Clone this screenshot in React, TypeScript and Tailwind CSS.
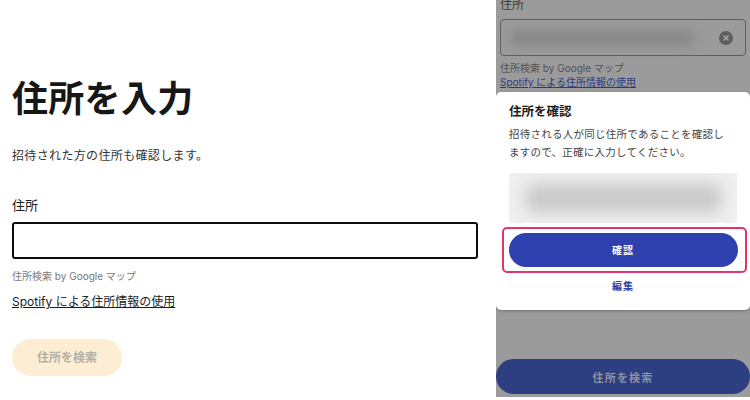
const FONT = "font-['Inter','Noto_Sans_CJK_JP',sans-serif]"

function AddressForm() {
  return (
    <div className="w-[496px] shrink-0 pl-3 pr-[18px] pt-[76px]">
      <h1 className="text-[36px] leading-[46px] font-bold text-[#171717] tracking-[0.3px]">住所を入力</h1>
      <p className="mt-[25px] text-[12px] leading-[18px] text-[#333333] tracking-[0.35px]">招待された方の住所も確認します。</p>
      <label className="block mt-[31px] text-[13px] leading-[18px] text-[#1c1c1c]">住所</label>
      <div className="mt-[8px] h-[37px] rounded-[3px] border-2 border-[#0d0d0d] bg-white" />
      <p className="mt-[9px] text-[10px] leading-[16px] text-[#777777]">住所検索 by Google マップ</p>
      <a className="block mt-[10px] w-fit text-[12px] leading-[16px] text-[#1c1c1c] underline">Spotify による住所情報の使用</a>
      <button className="mt-[29px] block w-[110px] h-[37px] rounded-full bg-[#fdeed3] text-[12px] font-bold text-[#b3aea5]">住所を検索</button>
    </div>
  )
}

function ConfirmPanel() {
  return (
    <div className="w-[254px] shrink-0 h-[397px] bg-[#9b9b9b] flex flex-col overflow-hidden">
      {/* dimmed form behind the dialog */}
      <div className="h-[92px] shrink-0 px-[4px]">
        <div className="text-[12px] leading-[14px] text-[#3a3a3a] -mt-[2px]">住所</div>
        <div className="mt-[7px] h-[37px] rounded-[4px] border border-[#5f5f5f] flex items-center pl-[10px] pr-[12px]">
          <div className="h-[14px] flex-1 mr-[10px] bg-[#858585] blur-[6px]" />
          <div className="ml-[16px] w-[14px] h-[14px] rounded-full bg-[#5e5e5e] flex items-center justify-center">
            <svg width="8" height="8" viewBox="0 0 8 8" stroke="#a8a8a8" strokeWidth="1.3">
              <path d="M1.5 1.5l5 5M6.5 1.5l-5 5" />
            </svg>
          </div>
        </div>
        <div className="mt-[5px] text-[10px] leading-[14px] text-[#525252]">住所検索 by Google マップ</div>
        <a className="block w-fit text-[10px] leading-[14px] text-[#2c3a7e] underline">Spotify による住所情報の使用</a>
      </div>

      {/* dialog */}
      <div className="h-[218px] shrink-0 bg-white rounded-[5px] shadow-[0_1px_3px_rgba(0,0,0,0.25)] pl-[6px] pr-[3px]">
        <h2 className="mt-[11px] ml-[7px] text-[12.5px] leading-[18px] font-bold text-[#1a1a1a]">住所を確認</h2>
        <p className="mt-[5px] ml-[7px] text-[10.5px] leading-[18px] text-[#444444] tracking-[0.25px] w-[225px]">
          招待される人が同じ住所であることを確認しますので、正確に入力してください。
        </p>
        <div className="mt-[11px] ml-[7px] mr-[10px] h-[50px] rounded-[3px] bg-[#f0f0f0] flex items-center justify-center overflow-hidden">
          <div className="w-[195px] h-[28px] bg-[#c8c8c8] blur-[8px]" />
        </div>
        <div className="mt-[4px] h-[46px] rounded-[5px] border-[2.5px] border-[#e2356b] py-[4px] pl-[4.5px] pr-[7.5px]">
          <button className="w-full h-full rounded-full bg-[#2f41ae] text-[10px] font-bold tracking-[1px] text-white">確認</button>
        </div>
        <div className="mt-[6px] text-center text-[10px] leading-[14px] font-bold tracking-[1px] text-[#2f41ae] pr-[3px]">編集</div>
      </div>

      {/* dimmed submit button */}
      <div className="flex-1 flex flex-col justify-end pb-[3px]">
        <button className="w-full h-[35px] pt-[3px] rounded-full bg-[#2d3f80] text-[11px] font-bold tracking-[1.2px] text-[#8e93a6]">住所を検索</button>
      </div>
    </div>
  )
}

export default function App() {
  return (
    <div className={`w-[750px] h-[400px] bg-white flex overflow-hidden ${FONT}`}>
      <AddressForm />
      <ConfirmPanel />
    </div>
  )
}
